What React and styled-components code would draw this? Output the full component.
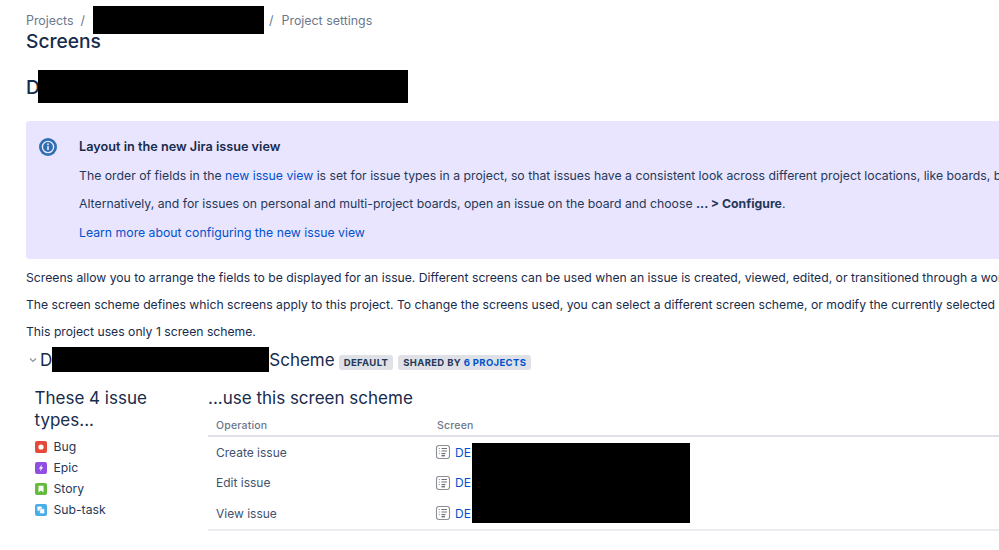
import React from "react";
import styled, { createGlobalStyle } from "styled-components";

const GlobalStyle = createGlobalStyle`
  html, body {
    margin: 0;
    background: #fff;
    overflow: hidden;
  }
  body {
    font-family: Inter, "Liberation Sans", sans-serif;
    color: #172b4d;
  }
`;

const Page = styled.div`
  width: 999px;
  height: 550px;
  overflow: hidden;
  box-sizing: border-box;
  padding: 6px 0 0 26px;
`;

const Breadcrumbs = styled.nav`
  display: flex;
  align-items: center;
  height: 28px;
  font-size: 12.4px;
  color: #6b778c;
`;

const Slash = styled.span`
  margin: 0 ${(p) => p.$gap || 8}px 0 ${(p) => p.$left || 8}px;
`;

const Redaction = styled.span`
  display: inline-block;
  flex: none;
  background: #000;
  width: ${(p) => p.$w}px;
  height: ${(p) => p.$h}px;
  margin-left: ${(p) => p.$left || 0}px;
`;

const Title = styled.h1`
  margin: -4px 0 0;
  font-size: 19.2px;
  line-height: 22px;
  font-weight: 500;
`;

const ProjectName = styled.h2`
  margin: 18px 0 0;
  display: flex;
  align-items: center;
  font-size: 19.2px;
  font-weight: 500;
`;

const Banner = styled.section`
  margin-top: 18px;
  width: 1200px;
  height: 138px;
  box-sizing: border-box;
  padding: 16px 13px;
  display: flex;
  background: #e9e5ff;
  border-radius: 3px;
`;

const BannerIcon = styled.svg`
  flex: none;
  width: 18px;
  height: 18px;
  margin: 1px 22px 0 0;
`;

const BannerBody = styled.div`
  font-size: 12.25px;
  line-height: 20px;
  white-space: nowrap;
`;

const BannerTitle = styled.div`
  font-size: 12.7px;
  font-weight: 600;
`;

const BannerLine = styled.p`
  margin: 8.6px 0 0;
  color: #253858;
`;

const Link = styled.a`
  color: #0052cc;
`;

const Intro = styled.p`
  margin: ${(p) => p.$top}px 0 0;
  font-size: 12.2px;
  line-height: 20px;
  white-space: nowrap;
  color: #172b4d;
`;

const SchemeHeader = styled.div`
  display: flex;
  align-items: center;
  height: 25px;
  margin-top: 5px;
  white-space: nowrap;
`;

const Chevron = styled.svg`
  width: 8px;
  height: 6px;
  margin: 0 3px 0 3px;
`;

const SchemeName = styled.h3`
  margin: 0;
  display: flex;
  align-items: center;
  font-size: 17px;
  font-weight: 400;
`;

const Lozenge = styled.span`
  margin: 6px 0 0 ${(p) => p.$left}px;
  padding: 0 5px;
  height: 15px;
  line-height: 15px;
  font-size: 9.5px;
  font-weight: 700;
  letter-spacing: 0.35px;
  border-radius: 3px;
  background: #dfe1e6;
  color: #253858;
`;

const LozengeLink = styled.span`
  color: #0052cc;
`;

const Columns = styled.div`
  display: flex;
  margin-top: 15px;
`;

const IssueTypes = styled.div`
  flex: none;
  width: 182px;
  padding-left: 8.5px;
  box-sizing: border-box;
`;

const ColumnTitle = styled.h4`
  margin: 0;
  font-size: 17px;
  line-height: 22px;
  font-weight: 400;
  white-space: ${(p) => (p.$nowrap ? "nowrap" : "normal")};
  width: ${(p) => (p.$nowrap ? "auto" : "140px")};
`;

const TypeList = styled.ul`
  list-style: none;
  margin: 5px 0 0;
  padding: 0;
`;

const TypeItem = styled.li`
  display: flex;
  align-items: center;
  gap: 7px;
  height: 21px;
  font-size: 12.2px;
  color: #253858;
`;

const TypeIcon = styled.svg`
  width: 12px;
  height: 12px;
  flex: none;
`;

const SchemeColumn = styled.div`
  flex: none;
  width: 900px;
  position: relative;
`;

const OpTable = styled.table`
  width: 100%;
  table-layout: fixed;
  margin-top: 5px;
  border-collapse: collapse;
  font-size: 12px;
  border-bottom: 2px solid #ebecf0;
`;

const Th = styled.th`
  height: 19px;
  padding: 2px 0 0 8px;
  text-align: left;
  font-size: 10.5px;
  font-weight: 500;
  letter-spacing: 0.2px;
  color: #6b778c;
  border-bottom: 2px solid #dfe1e6;
  width: ${(p) => p.$w || "auto"};
`;

const Td = styled.td`
  height: 30.5px;
  padding: 0 0 0 8px;
  color: #42526e;
`;

const ScreenCell = styled.span`
  display: flex;
  align-items: center;
  gap: 4px;
  margin-left: -2px;
`;

const ScreenIcon = styled.svg`
  width: 16px;
  height: 16px;
  flex: none;
`;

const TableRedaction = styled(Redaction)`
  position: absolute;
  left: 264px;
  top: 56px;
`;

const issueTypes = [
  { name: "Bug", color: "#e5493a", glyph: <circle cx="6" cy="6" r="2.6" fill="#fff" /> },
  { name: "Epic", color: "#904ee2", glyph: <path d="M6.8 2.4 3.9 6.7h1.8l-.5 2.9 2.9-4.3H6.3z" fill="#fff" /> },
  { name: "Story", color: "#63ba3c", glyph: <path d="M3.5 2.8h5v6.4L6 7.4 3.5 9.2z" fill="#fff" /> },
  {
    name: "Sub-task",
    color: "#4bade8",
    glyph: (
      <>
        <rect x="2.4" y="2.4" width="4.4" height="4.4" rx="0.8" fill="#fff" />
        <rect x="4.8" y="4.8" width="4.8" height="4.8" rx="0.8" fill="#fff" stroke="#4bade8" strokeWidth="0.5" />
      </>
    ),
  },
];

const operations = ["Create issue", "Edit issue", "View issue"];

function ScreenGlyph() {
  return (
    <ScreenIcon viewBox="0 0 16 16" fill="none">
      <rect x="1.5" y="1.5" width="13" height="13" rx="2.5" stroke="#8c8f96" strokeWidth="1.1" />
      <path d="M6.5 4.5h5.5M6.5 7h5.5M6.5 9.5h4" stroke="#6f7278" strokeWidth="1.1" />
      <path d="M3.8 4.5h1M3.8 7h1M3.8 9.5h1" stroke="#8c8f96" strokeWidth="1.1" />
      <rect x="6.5" y="10.8" width="3.5" height="1.6" fill="#6f7278" />
    </ScreenIcon>
  );
}

export default function App() {
  return (
    <Page>
      <GlobalStyle />
      <Breadcrumbs>
        <span>Projects</span>
        <Slash $left={7} $gap={8}>/</Slash>
        <Redaction $w={171} $h={28} />
        <Slash $left={5} $gap={8}>/</Slash>
        <span>Project settings</span>
      </Breadcrumbs>
      <Title>Screens</Title>
      <ProjectName>
        D
        <Redaction $w={370} $h={33} $left={-2} />
      </ProjectName>
      <Banner>
        <BannerIcon viewBox="0 0 18 18">
          <circle cx="9" cy="9" r="9" fill="#2e6fb3" />
          <circle cx="9" cy="9" r="5.6" fill="none" stroke="#e9e5ff" strokeWidth="1.4" />
          <rect x="8.2" y="8" width="1.6" height="4" fill="#e9e5ff" />
          <circle cx="9" cy="6.3" r="0.95" fill="#e9e5ff" />
        </BannerIcon>
        <BannerBody>
          <BannerTitle>Layout in the new Jira issue view</BannerTitle>
          <BannerLine>
            The order of fields in the <Link>new issue view</Link> is set for issue types in a project, so that issues
            have a consistent look across different project locations, like boards, backlogs, and more.
          </BannerLine>
          <BannerLine>
            Alternatively, and for issues on personal and multi-project boards, open an issue on the board and choose{" "}
            <strong>... &gt; Configure</strong>.
          </BannerLine>
          <BannerLine>
            <Link>Learn more about configuring the new issue view</Link>
          </BannerLine>
        </BannerBody>
      </Banner>
      <Intro $top={9}>
        Screens allow you to arrange the fields to be displayed for an issue. Different screens can be used when an
        issue is created, viewed, edited, or transitioned through a workflow.
      </Intro>
      <Intro $top={7}>
        The screen scheme defines which screens apply to this project. To change the screens used, you can select a
        different screen scheme, or modify the currently selected scheme.
      </Intro>
      <Intro $top={7}>This project uses only 1 screen scheme.</Intro>
      <SchemeHeader>
        <Chevron viewBox="0 0 8 6" fill="none">
          <path d="M1 1.5 4 4.5 7 1.5" stroke="#8993a4" strokeWidth="1.2" />
        </Chevron>
        <SchemeName>
          D
          <Redaction $w={217} $h={25} />
          Scheme
        </SchemeName>
        <Lozenge $left={4}>DEFAULT</Lozenge>
        <Lozenge $left={5}>
          SHARED BY <LozengeLink>6 PROJECTS</LozengeLink>
        </Lozenge>
      </SchemeHeader>
      <Columns>
        <IssueTypes>
          <ColumnTitle>These 4 issue types...</ColumnTitle>
          <TypeList>
            {issueTypes.map((type) => (
              <TypeItem key={type.name}>
                <TypeIcon viewBox="0 0 12 12">
                  <rect width="12" height="12" rx="2" fill={type.color} />
                  {type.glyph}
                </TypeIcon>
                {type.name}
              </TypeItem>
            ))}
          </TypeList>
        </IssueTypes>
        <SchemeColumn>
          <ColumnTitle $nowrap>...use this screen scheme</ColumnTitle>
          <OpTable>
            <thead>
              <tr>
                <Th $w="213px">Operation</Th>
                <Th>Screen</Th>
              </tr>
            </thead>
            <tbody>
              {operations.map((op) => (
                <tr key={op}>
                  <Td>{op}</Td>
                  <Td>
                    <ScreenCell>
                      <ScreenGlyph />
                      <Link>DE</Link>
                    </ScreenCell>
                  </Td>
                </tr>
              ))}
            </tbody>
          </OpTable>
          <TableRedaction $w={218} $h={80} />
        </SchemeColumn>
      </Columns>
    </Page>
  );
}
